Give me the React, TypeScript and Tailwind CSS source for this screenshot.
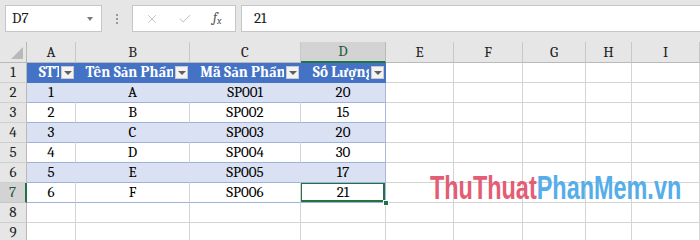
import { X, Check } from "lucide-react";

const COLS = ["A", "B", "C", "D", "E", "F", "G", "H", "I"];
const WIDTHS = ["w-[49px]", "w-[114px]", "w-[111px]", "w-[85px]", "w-[68px]", "w-[69px]", "w-[63px]", "w-[46px]", "flex-1"];

const HEADERS = ["STT", "Tên Sản Phẩm", "Mã Sản Phẩm", "Số Lượng"];
const DATA = [
  ["1", "A", "SP001", "20"],
  ["2", "B", "SP002", "15"],
  ["3", "C", "SP003", "20"],
  ["4", "D", "SP004", "30"],
  ["5", "E", "SP005", "17"],
  ["6", "F", "SP006", "21"],
];

function FilterButton() {
  return (
    <div className="absolute right-0 top-0 h-full flex items-center pl-[2px] pr-[1px] bg-[#4472c4]">
      <div className="w-[13px] h-[13px] bg-[#f3f3f3] border border-[#c9c9c9] flex items-center justify-center">
        <div className="w-0 h-0 border-l-[4px] border-r-[4px] border-t-[4px] border-l-transparent border-r-transparent border-t-[#606060]" />
      </div>
    </div>
  );
}

function cellClass(row: number, col: number) {
  const base = "h-full shrink-0 border-b border-r box-border flex items-center justify-center relative";
  if (col < 4 && row === 1) return `${base} bg-[#4472c4] border-[#4472c4] text-white font-bold`;
  if (col < 4 && row >= 2 && row <= 7) {
    const shaded = row % 2 === 0;
    const right = col === 3 ? "border-r-[#aab8d6]" : shaded ? "border-r-[#d9e1f2]" : "border-r-[#d4d4d4]";
    return `${base} ${shaded ? "bg-[#d9e1f2]" : "bg-white"} border-b-[#9fb3da] ${right} text-black`;
  }
  return `${base} bg-white border-[#d4d4d4]`;
}

function GridRow({ row }: { row: number }) {
  const selected = row === 7;
  return (
    <div className="flex h-[20px]">
      <div
        className={
          selected
            ? "w-[27px] shrink-0 h-full bg-[#d3d3d3] border-b border-b-[#c6c6c6] border-r-2 border-r-[#217346] box-border flex items-center justify-center text-[#1e5c3a]"
            : "w-[27px] shrink-0 h-full bg-[#e6e6e6] border-b border-b-[#cfcfcf] border-r border-r-[#b9b9b9] box-border flex items-center justify-center text-[#222]"
        }
      >
        {row}
      </div>
      {COLS.map((_, c) => {
        let content: React.ReactNode = null;
        if (row === 1 && c < 4) {
          content = (
            <>
              <div className="w-full text-center whitespace-nowrap">{HEADERS[c]}</div>
              <FilterButton />
            </>
          );
        } else if (row >= 2 && row <= 7 && c < 4) {
          content = DATA[row - 2][c];
        }
        return (
          <div key={c} className={`${WIDTHS[c]} ${cellClass(row, c)} overflow-hidden`}>
            {content}
            {row === 7 && c === 3 && (
              <div className="absolute inset-0 -top-px -left-px border-2 border-[#217346]" />
            )}
          </div>
        );
      })}
    </div>
  );
}

export default function App() {
  return (
    <div className="w-[700px] h-[240px] overflow-hidden bg-[#e6e6e6] relative text-[15px] leading-none font-serif text-[#1a1a1a]">
      {/* formula bar */}
      <div className="h-[42px] flex items-start pt-[5px]">
        <div className="ml-[5px] w-[97px] h-[27px] bg-white border border-[#c6c6c6] flex items-center pl-[6px] pr-[8px]">
          <span className="flex-1">D7</span>
          <div className="w-0 h-0 border-l-[3.5px] border-r-[3.5px] border-t-[4px] border-l-transparent border-r-transparent border-t-[#7a7a7a]" />
        </div>
        <div className="w-[30px] h-[27px] flex flex-col items-center justify-center gap-[2px]">
          <div className="w-[2px] h-[2px] bg-[#9a9a9a]" />
          <div className="w-[2px] h-[2px] bg-[#9a9a9a]" />
          <div className="w-[2px] h-[2px] bg-[#9a9a9a]" />
        </div>
        <div className="w-[104px] h-[27px] bg-white border border-[#c6c6c6] flex items-center pl-[12px]">
          <X size={14} strokeWidth={1.4} color="#b4b4b4" />
          <Check size={14} strokeWidth={1.6} color="#b4b4b4" className="ml-[19px]" />
          <span className="ml-[21px] italic text-[14px] text-[#555]">
            f<span className="text-[10px] align-[-2px]">x</span>
          </span>
        </div>
        <div className="ml-[5px] flex-1 h-[27px] bg-white border border-[#c6c6c6] border-r-0 flex items-center pl-[12px]">
          21
        </div>
      </div>

      {/* column headers */}
      <div className="flex h-[21px]">
        <div className="w-[27px] shrink-0 h-full bg-[#e6e6e6] border-r border-b border-[#b9b9b9] box-border relative">
          <svg className="absolute right-[3px] bottom-[3px]" width="12" height="12" viewBox="0 0 12 12">
            <polygon points="12,0 12,12 0,12" fill="#b9b9b9" />
          </svg>
        </div>
        {COLS.map((name, c) =>
          c === 3 ? (
            <div
              key={name}
              className={`${WIDTHS[c]} shrink-0 h-full bg-[#d3d3d3] border-r border-r-[#b9b9b9] border-b-2 border-b-[#217346] box-border flex items-center justify-center text-[#1e5c3a]`}
            >
              {name}
            </div>
          ) : (
            <div
              key={name}
              className={`${WIDTHS[c]} shrink-0 h-full bg-[#e6e6e6] border-r border-r-[#c8c8c8] border-b border-b-[#b9b9b9] box-border flex items-center justify-center text-[#222]`}
            >
              {name}
            </div>
          )
        )}
      </div>

      {/* grid */}
      <div className="bg-white">
        {[1, 2, 3, 4, 5, 6, 7, 8, 9].map((r) => (
          <GridRow key={r} row={r} />
        ))}
      </div>

      {/* fill handle */}
      <div className="absolute left-[383px] top-[200px] w-[6px] h-[6px] bg-[#217346] border border-white" />

      {/* watermark */}
      <div className="absolute left-[430px] top-[171px] origin-left scale-x-[0.71] whitespace-nowrap [font-family:Arial,sans-serif] font-bold text-[33px] leading-none">
        <span className="text-[#e35d75]">ThuThuat</span>
        <span className="text-[#55aeea]">PhanMem.vn</span>
      </div>
    </div>
  );
}
